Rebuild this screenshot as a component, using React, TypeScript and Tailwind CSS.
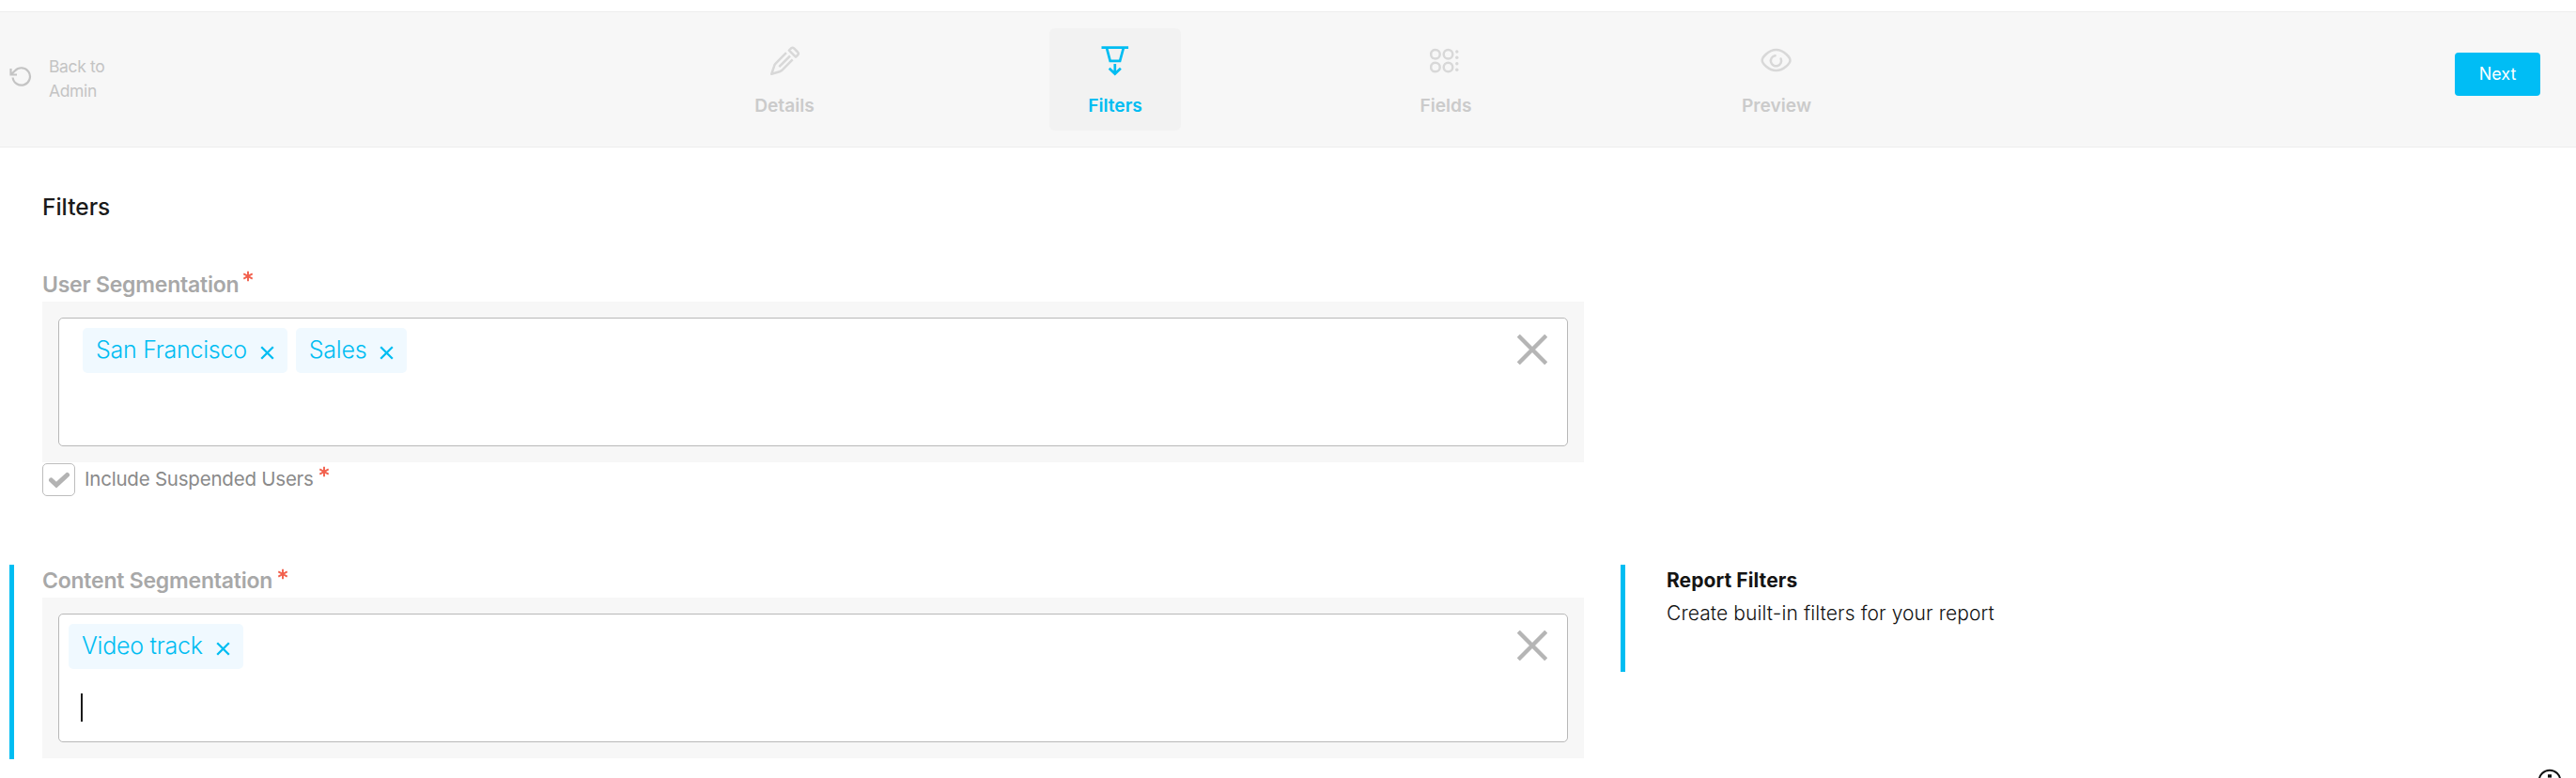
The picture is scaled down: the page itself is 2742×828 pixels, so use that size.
import React from "react";

const Pencil = () => (
  <svg width="34" height="34" viewBox="0 0 34 34" fill="none" stroke="currentColor" strokeWidth="2.5" strokeLinejoin="round">
    <path d="M18.9 9.1 7.6 20.6Q6.3 22 5.9 23.8L3.2 31.8 11.8 29.2Q13.6 28.6 14.8 27.4L25.7 16.3" />
    <path d="M21.9 6.6 24.1 4.4Q25.6 3 27.1 4.4L31.2 8.5Q32.6 10 31.2 11.5L29 13.7Z" />
    <path d="M11.3 24.2 23 12.5" />
  </svg>
);

const Funnel = () => (
  <svg width="34" height="34" viewBox="0 0 34 34" fill="none" stroke="currentColor" strokeWidth="2.7">
    <path d="M2.5 3.7H31.1M7.9 3.7 11.7 17.9H22.1L26 3.7M16.8 21V31.5M10.7 25.8 16.8 31.6 22.9 25.8" />
  </svg>
);

const Fields = () => (
  <svg width="34" height="34" viewBox="0 0 34 34" fill="none" stroke="currentColor" strokeWidth="2.5">
    <circle cx="5.9" cy="10.7" r="4.8" />
    <circle cx="19.5" cy="10.7" r="4.8" />
    <circle cx="5.9" cy="24.5" r="4.8" />
    <circle cx="19.5" cy="24.5" r="4.8" />
    <g fill="currentColor" stroke="none">
      <circle cx="28.8" cy="8" r="1.7" />
      <circle cx="28.8" cy="14.3" r="1.7" />
      <circle cx="28.8" cy="20.7" r="1.7" />
      <circle cx="28.8" cy="27.3" r="1.7" />
    </g>
  </svg>
);

const Eye = () => (
  <svg width="34" height="34" viewBox="0 0 34 34" fill="none" stroke="currentColor" strokeWidth="2.5" strokeLinecap="round">
    <path d="M1.7 17.2C1.7 14.2 8.4 6 16.6 6S31.5 14.2 31.5 17.2 24.8 27.9 16.6 27.9 1.7 20.2 1.7 17.2Z" strokeLinejoin="round" />
    <path d="M15.6 12.2A5.6 5.6 0 1 0 21.6 15.5" />
  </svg>
);

const tabs = [
  { label: "Details", Icon: Pencil, active: false },
  { label: "Filters", Icon: Funnel, active: true },
  { label: "Fields", Icon: Fields, active: false },
  { label: "Preview", Icon: Eye, active: false },
];

const Cross = ({ size, width }: { size: number; width: number }) => (
  <svg width={size} height={size} viewBox={`0 0 ${size} ${size}`} stroke="currentColor" strokeWidth={width} className="shrink-0">
    <path d={`M1.2 1.2 ${size - 1.2} ${size - 1.2}M${size - 1.2} 1.2 1.2 ${size - 1.2}`} />
  </svg>
);

const Star = () => (
  <svg width="12" height="12" viewBox="0 0 12 12" stroke="#f2604d" strokeWidth="1.9" className="shrink-0">
    <path d="M6 .8V11.2M1.3 3.4 10.7 8.6M10.7 3.4 1.3 8.6" />
  </svg>
);

const Chip = ({ children }: { children: string }) => (
  <span className="flex h-12 items-center rounded-[5px] bg-[#f0f9ff] px-[14px] text-[25px] leading-[48px] font-light tracking-[-0.25px] text-[#00bdf2]">
    <span className="-mt-[2px]">{children}</span>
    <span className="mt-[4px] ml-[14px]">
      <Cross size={15} width={2.3} />
    </span>
  </span>
);

const Field = ({ children, className }: { children: React.ReactNode; className: string }) => (
  <div className="w-[1641px] bg-[#f7f7f7] px-[17px] pt-[17px] pb-[17px]">
    <div className={`flex h-[137px] items-start justify-between rounded-[5px] border border-[#b8b8b8] bg-white pt-[10px] ${className}`}>
      {children}
      <span className="mt-[7px] mr-[21px] text-[#b5b5b5]">
        <Cross size={32} width={4.4} />
      </span>
    </div>
  </div>
);

export default function App() {
  return (
    <div className="h-[828px] w-[2742px] overflow-hidden bg-white font-['Inter',sans-serif] whitespace-nowrap">
      <header className="mt-3 flex h-[145px] items-start border-y border-[#ededed] bg-[#f7f7f7]">
        <div className="flex w-[765px] items-start pt-[45px] pl-[10px] text-[#c4c4c4]">
          <svg width="24" height="22" viewBox="0 0 24 22" fill="none" stroke="currentColor" strokeWidth="2.2" className="mt-[13px] mr-[18px]">
            <path d="M1.5 2V8.5H8M1.8 8.2 6 4.2A9.2 9.2 0 1 1 3.6 11.5" />
          </svg>
          <div className="text-[17.5px] leading-[26px] font-normal tracking-[-0.35px]">
            Back to
            <br />
            Admin
          </div>
        </div>
        <nav className="flex gap-[212px] pt-[17px]">
          {tabs.map(({ label, Icon, active }) => (
            <div
              key={label}
              className={`flex h-[109px] w-[140px] flex-col items-center rounded-[6px] pt-[17px] ${active ? "bg-[#f2f2f2] text-[#00bdf2]" : "text-[#d8d8d8]"}`}
            >
              <Icon />
              <span className={`mt-[19px] text-[19.2px] leading-6 font-semibold ${active ? "" : "text-[#cbcbcb]"}`}>{label}</span>
            </div>
          ))}
        </nav>
        <button className="mt-[43px] mr-[38px] ml-auto h-[46px] w-[91px] rounded-[4px] bg-[#00bdf5] pb-[2px] text-[18px] font-normal text-white">Next</button>
      </header>

      <main className="pl-[45px]">
        <h1 className="mt-[48px] text-[24.5px] leading-[30px] font-medium text-[#1a1a1a]">Filters</h1>

        <section className="mt-[50px]">
          <div className="flex h-[36px] items-start">
            <span className="w-[208px] text-[23px] leading-[36px] font-semibold tracking-[-0.22px] text-[#a8a8a8]">User Segmentation</span>
            <span className="mt-[3px] ml-[5px]"><Star /></span>
          </div>
          <Field className="pl-[25px]">
            <div className="flex gap-[9px]">
              <Chip>San Francisco</Chip>
              <Chip>Sales</Chip>
            </div>
          </Field>
          <div className="mt-px flex h-[35px] items-start">
            <span className="flex h-[35px] w-[35px] items-center justify-center rounded-[5px] border-[1.5px] border-[#bdbdbd]">
              <svg width="24" height="18" viewBox="0 0 24 18" fill="none" stroke="#b3b3b3" strokeWidth="5" strokeLinecap="round">
                <path d="M3.5 9 9 14 20.5 3.5" />
              </svg>
            </span>
            <span className="ml-[10px] w-[243px] text-[20.5px] leading-[34px] font-normal tracking-[-0.22px] text-[#8a8a8a]">Include Suspended Users</span>
            <span className="mt-[3px] ml-[6px]"><Star /></span>
          </div>
        </section>

        <div className="mt-[73px] -ml-[35px] flex items-start">
          <section className="h-[207px] border-l-[5px] border-[#00bdf2] pl-[30px]">
            <div className="flex h-[35px] items-start">
              <span className="w-[245px] text-[23px] leading-[35px] font-semibold tracking-[-0.22px] text-[#a8a8a8]">Content Segmentation</span>
              <span className="mt-[4px] ml-[5px]"><Star /></span>
            </div>
            <Field className="pl-[10px]">
              <div className="flex flex-col items-start">
                <Chip>Video track</Chip>
                <span className="mt-[26px] ml-[13px] h-[30px] w-[2px] bg-[#1a1a1a]" />
              </div>
            </Field>
          </section>
          <aside className="ml-[39px] h-[114px] border-l-[5px] border-[#00bdf2] pl-[44px]">
            <h2 className="text-[21px] leading-[34px] font-bold tracking-[0.08px] text-[#141414]">Report Filters</h2>
            <p className="text-[21px] leading-[35px] font-light tracking-[0.1px] text-[#111111]">Create built-in filters for your report</p>
          </aside>
        </div>
      </main>

      <div className="h-[20px] pl-[2701px]">
        <svg width="26" height="26" viewBox="0 0 26 26" className="mt-[10px]">
          <circle cx="13" cy="13" r="11.3" fill="#fff" stroke="#111" strokeWidth="2" />
          <path d="M11 6.2H15V9.6H11Z" fill="#111" />
        </svg>
      </div>
    </div>
  );
}
